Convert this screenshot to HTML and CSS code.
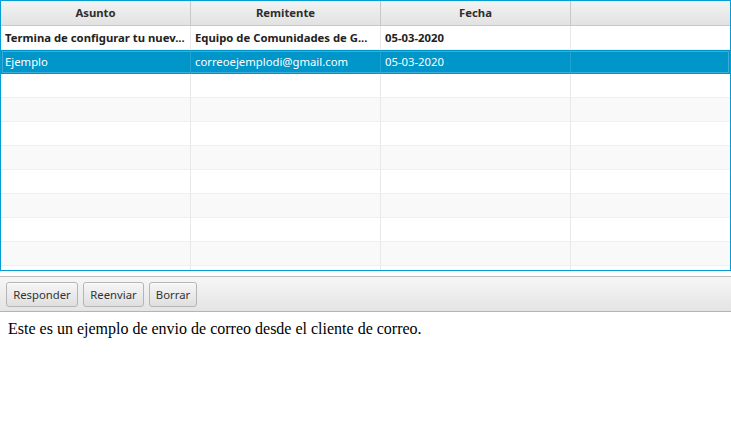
FILE: index.html
```html
<!DOCTYPE html>
<html>
<head>
<meta charset="utf-8">
<link rel="stylesheet" href="styles.css">
</head>
<body>
<div class="app">
  <div class="table">
    <div class="row head">
      <div class="cell">Asunto</div>
      <div class="cell">Remitente</div>
      <div class="cell">Fecha</div>
      <div class="cell"></div>
    </div>
    <div class="row odd bold">
      <div class="cell">Termina de configurar tu nuev...</div>
      <div class="cell">Equipo de Comunidades de G...</div>
      <div class="cell">05-03-2020</div>
      <div class="cell"></div>
    </div>
    <div class="row selected">
      <div class="cell">Ejemplo</div>
      <div class="cell">correoejemplodi@gmail.com</div>
      <div class="cell">05-03-2020</div>
      <div class="cell"></div>
    </div>
    <div class="row odd"><div class="cell"></div><div class="cell"></div><div class="cell"></div><div class="cell"></div></div>
    <div class="row even"><div class="cell"></div><div class="cell"></div><div class="cell"></div><div class="cell"></div></div>
    <div class="row odd"><div class="cell"></div><div class="cell"></div><div class="cell"></div><div class="cell"></div></div>
    <div class="row even"><div class="cell"></div><div class="cell"></div><div class="cell"></div><div class="cell"></div></div>
    <div class="row odd"><div class="cell"></div><div class="cell"></div><div class="cell"></div><div class="cell"></div></div>
    <div class="row even"><div class="cell"></div><div class="cell"></div><div class="cell"></div><div class="cell"></div></div>
    <div class="row odd"><div class="cell"></div><div class="cell"></div><div class="cell"></div><div class="cell"></div></div>
    <div class="row even"><div class="cell"></div><div class="cell"></div><div class="cell"></div><div class="cell"></div></div>
    <div class="row odd"><div class="cell"></div><div class="cell"></div><div class="cell"></div><div class="cell"></div></div>
  </div>
  <div class="divider"></div>
  <div class="toolbar">
    <button class="btn btn-responder">Responder</button>
    <button class="btn btn-reenviar">Reenviar</button>
    <button class="btn btn-borrar">Borrar</button>
  </div>
  <div class="message">Este es un ejemplo de envio de correo desde el cliente de correo.</div>
</div>
</body>
</html>
```

FILE: styles.css
```css
html, body {
  margin: 0;
  padding: 0;
  background: #ffffff;
}

.app {
  width: 731px;
  height: 424px;
  display: flex;
  flex-direction: column;
  font-family: "Noto Sans", "Open Sans", sans-serif;
  font-size: 11.3px;
  color: #333333;
}

.table {
  box-sizing: border-box;
  height: 271px;
  border: 1px solid #039ed3;
  overflow: hidden;
  background: #ffffff;
  flex: none;
}

.row {
  display: grid;
  grid-template-columns: 190px 190px 190px 1fr;
  height: 24px;
  box-sizing: border-box;
  border-bottom: 1px solid #efefef;
}

.cell {
  box-sizing: border-box;
  border-right: 1px solid #e8e8e8;
  padding: 0 4px;
  line-height: 23px;
  white-space: nowrap;
  overflow: hidden;
}

.cell:last-child {
  border-right: none;
}

.head {
  height: 25px;
  border-bottom: 1px solid #c8c8c8;
  background: linear-gradient(#f3f3f3, #e2e2e2);
  font-weight: bold;
  color: #2e2e2e;
}

.head .cell {
  text-align: center;
  border-right: 1px solid #c8c8c8;
  line-height: 24px;
}

.head .cell:last-child {
  border-right: none;
}

.odd {
  background: #ffffff;
}

.even {
  background: #f9f9f9;
}

.bold {
  font-weight: bold;
  color: #222222;
}

.selected {
  background: #0096c9;
  color: #ffffff;
  border-bottom: none;
  box-shadow: inset 0 0 0 1px #0096c9, inset 0 0 0 2px #3aaed9;
}

.selected .cell {
  border-right-color: #22a4d2;
  line-height: 24px;
}

.divider {
  height: 5px;
  flex: none;
  background: #ffffff;
}

.toolbar {
  flex: none;
  box-sizing: border-box;
  height: 36px;
  border-top: 1px solid #bcbcbc;
  border-bottom: 1px solid #b4b4b4;
  background: linear-gradient(#f6f6f6, #e4e4e4);
  padding: 5px 6px 4px 6px;
  display: flex;
  gap: 5px;
  align-items: flex-start;
}

.btn {
  box-sizing: border-box;
  height: 25px;
  margin: 0;
  padding: 0;
  border: 1px solid #b5b5b5;
  border-radius: 3px;
  background: linear-gradient(#f6f6f6, #dfdfdf);
  box-shadow: inset 0 1px 0 #fbfbfb;
  font-family: "Noto Sans", "Open Sans", sans-serif;
  font-size: 11.3px;
  color: #333333;
  text-align: center;
}

.btn-responder {
  width: 72px;
}

.btn-reenviar {
  width: 61px;
}

.btn-borrar {
  width: 48px;
}

.message {
  flex: 1;
  padding: 8px 8px;
  font-family: "Liberation Serif", "Times New Roman", serif;
  font-size: 16px;
  color: #000000;
}
```
